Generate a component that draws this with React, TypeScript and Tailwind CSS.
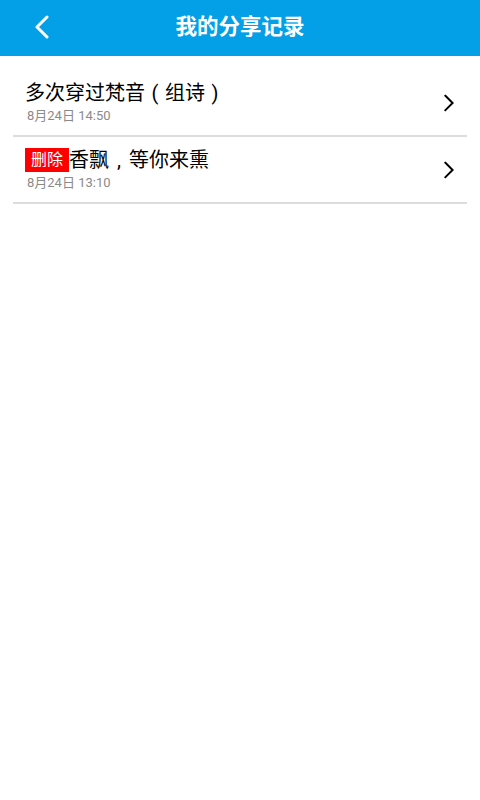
const FONT = { fontFamily: 'Roboto, "Noto Sans CJK SC", sans-serif' };

const records = [
  { title: "多次穿过梵音（组诗）", time: "8月24日 14:50", deleted: false },
  { title: "香飘，等你来熏", time: "8月24日 13:10", deleted: true },
];

// full-width punctuation drawn centred in its em box, like the old Android fallback font
const CENTERED: Record<string, string> = { "（": "(", "）": ")", "，": "," };

function Title({ text }: { text: string }) {
  return (
    <>
      {Array.from(text).map((ch, i) =>
        CENTERED[ch] ? (
          <span key={i} className="inline-block w-[1em] text-center">
            {CENTERED[ch]}
          </span>
        ) : (
          <span key={i}>{ch}</span>
        )
      )}
    </>
  );
}

function Chevron({ className }: { className?: string }) {
  return (
    <svg viewBox="0 0 12 20" className={className} fill="none" stroke="currentColor" strokeWidth={2.2} strokeLinecap="square">
      <path d="M2 2 L10 10 L2 18" />
    </svg>
  );
}

export default function App() {
  return (
    <div className="w-[480px] h-[800px] bg-white" style={FONT}>
      {/* header */}
      <div className="relative h-[56px] bg-[#03a0e8] flex items-center justify-center">
        <button className="absolute left-[34px] top-[15px] text-white">
          <svg viewBox="0 0 16 24" className="w-[16px] h-[24px]" fill="none" stroke="currentColor" strokeWidth={3} strokeLinecap="round" strokeLinejoin="round">
            <path d="M13 2 L3 12 L13 22" />
          </svg>
        </button>
        <h1 className="text-white text-[21.5px] font-bold leading-none -mt-[3px]">我的分享记录</h1>
      </div>

      {/* list */}
      <div className="pt-[14px]">
        {records.map((r, i) => (
          <div key={i} className="mx-[13px] h-[67px] border-b-2 border-[#dcdcdc] flex items-center">
            <div className="flex-1 pl-[12px]">
              <div className="flex items-center text-[20px] leading-[26px] text-black">
                {r.deleted && (
                  <span className="w-[44px] h-[24px] mr-[0px] bg-[#ff0000] text-white text-[16px] leading-[24px] text-center">删除</span>
                )}
                <span className="whitespace-nowrap">
                  <Title text={r.title} />
                </span>
              </div>
              <div className="text-[13px] leading-[18px] text-[#8a8a8a] mt-[1px] pl-[2px]">{r.time}</div>
            </div>
            <Chevron className="w-[12px] h-[18px] text-black mr-[12px]" />
          </div>
        ))}
      </div>
    </div>
  );
}
